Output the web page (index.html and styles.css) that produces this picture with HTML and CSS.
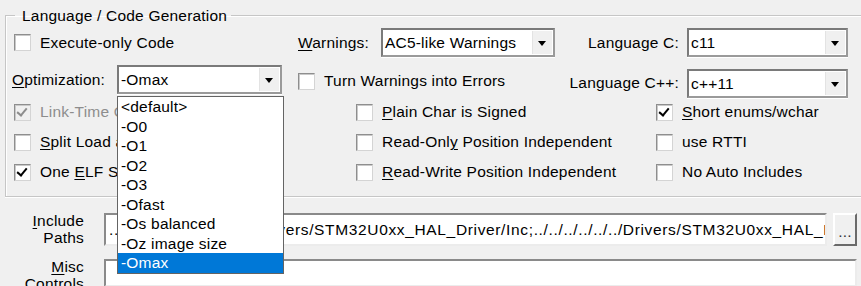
FILE: index.html
```html
<!DOCTYPE html>
<html lang="en">
<head>
    <meta charset="UTF-8">
    <title>Options for Target - C/C++</title>
    <link rel="stylesheet" href="styles.css">
</head>
<body>

<div class="dialog">
    <fieldset class="group">
        <legend>Language / Code Generation</legend>

        <!-- first row: execute-only, warnings, language C -->
        <div class="row row-one">
            <label class="check cell-left1"><span class="box"></span>Execute-only Code</label>
            <span class="lbl cell-warn"><u>W</u>arnings:</span>
            <div class="combo combo-warn"><span class="val">AC5-like Warnings</span><span class="arrow"></span></div>
            <span class="lbl lbl-lang">Language C:</span>
            <div class="combo combo-lang"><span class="val">c11</span><span class="arrow"></span></div>
        </div>

        <!-- second row: optimization (open) -->
        <div class="row row-two">
            <span class="lbl cell-opt"><u>O</u>ptimization:</span>
            <div class="combo combo-opt">
                <span class="val">-Omax</span><span class="arrow"></span>
                <ul class="droplist">
                    <li>&lt;default&gt;</li>
                    <li>-O0</li>
                    <li>-O1</li>
                    <li>-O2</li>
                    <li>-O3</li>
                    <li>-Ofast</li>
                    <li>-Os balanced</li>
                    <li>-Oz image size</li>
                    <li class="selected">-Omax</li>
                </ul>
            </div>
            <label class="check cell-turn"><span class="box"></span>Turn Warnings into Errors</label>
            <span class="lbl lbl-lang">Language C++:</span>
            <div class="combo combo-lang combo-cpp"><span class="val">c++11</span><span class="arrow"></span></div>
        </div>

        <div class="row row-small">
            <label class="check cell-left disabled"><span class="box checked"></span>Link-Time Optimization</label>
            <label class="check cell-mid"><span class="box"></span><span><u>P</u>lain Char is Signed</span></label>
            <label class="check"><span class="box checked"></span><span><u>S</u>hort enums/wchar</span></label>
        </div>
        <div class="row row-small">
            <label class="check cell-left"><span class="box"></span><span><u>S</u>plit Load and Store Multiple</span></label>
            <label class="check cell-mid"><span class="box"></span><span>Read-Onl<u>y</u> Position Independent</span></label>
            <label class="check"><span class="box"></span>use RTTI</label>
        </div>
        <div class="row row-small">
            <label class="check cell-left"><span class="box checked"></span><span>One <u>E</u>LF Section per Function</span></label>
            <label class="check cell-mid"><span class="box"></span><span><u>R</u>ead-Write Position Independent</span></label>
            <label class="check"><span class="box"></span>No Auto Includes</label>
        </div>
    </fieldset>

    <div class="paths">
        <span class="plabel"><u>I</u>nclude<br>Paths</span>
        <div class="field path-text">../../Inc;../../../../../../Drivers/STM32U0xx_HAL_Driver/Inc;../../../../../../Drivers/STM32U0xx_HAL_Driver/Inc/Legacy</div>
        <div class="browse">...</div>

        <span class="plabel"><u>M</u>isc<br>Controls</span>
        <div class="field area"></div>
    </div>
</div>

</body>
</html>
```

FILE: styles.css
```css
body {
    margin: 0;
    height: 286px;
    overflow: hidden;
    background-color: #f0f0f0;
    font-family: 'Liberation Sans', Arial, sans-serif;
    font-size: 15.5px;
    letter-spacing: 0.2px;
    color: #000;
}
u {
    text-decoration-thickness: 1px;
    text-underline-offset: 2px;
}
.dialog {
    padding: 7px 0 0 5px;
    width: 880px;
}

/* group box */
.group {
    margin: 0;
    padding: 4px 0 9px 6px;
    border: 1px solid #c6c6c6;
    border-right: none;
    box-shadow: 1px 1px 0 #fff inset, 0 1px 0 #fff;
}
.group legend {
    margin-left: 3px;
    padding: 0 4px 0 7px;
    line-height: 17px;
}

.row {
    display: flex;
    align-items: center;
    white-space: nowrap;
}
.row-one {
    height: 29px;
}
.row-two {
    height: 32px;
    margin-top: 8px;
    align-items: flex-start;
}
.row-small {
    height: 30px;
}

.lbl {
    display: inline-block;
}
.cell-left1 { width: 284px; margin-left: 2px; }
.cell-warn { width: 83px; }
.lbl-lang {
    width: 124px;
    margin-right: 8px;
    text-align: right;
}
.cell-opt {
    width: 105px;
    margin-top: 6px;
}
.cell-turn {
    width: 257px;
    margin-left: 16px;
    margin-top: 7px;
}
.row-two .lbl-lang { margin-top: 9px; }
.cell-left { width: 342px; margin-left: 2px; }
.cell-mid { width: 300px; }

/* checkboxes */
.check {
    display: flex;
    align-items: center;
}
.box {
    position: relative;
    width: 15px;
    height: 15px;
    margin-right: 9px;
    background: #fff;
    border: 1px solid #8e8e8e;
    border-right-color: #d4d4d4;
    border-bottom-color: #d4d4d4;
    box-shadow: 1px 1px 0 #c9c9c9 inset;
    flex: none;
}
.box.checked::after {
    content: "";
    position: absolute;
    left: 4px;
    top: 1px;
    width: 4px;
    height: 8px;
    border: solid #000;
    border-width: 0 2.5px 2.5px 0;
    transform: rotate(40deg);
}
.disabled {
    color: #8d8d8d;
}
.disabled .box {
    background: #f0f0f0;
}
.disabled .box.checked::after {
    border-color: #8d8d8d;
}

/* combo boxes */
.combo {
    position: relative;
    display: flex;
    align-items: center;
    height: 29px;
    box-sizing: border-box;
    background: #fff;
    border: 2px solid #7a7a7a;
    border-right-color: #9a9a9a;
    border-bottom-color: #9a9a9a;
    box-shadow: 0 1px 0 #fff;
}
.combo .val {
    flex: 1;
    padding-left: 2px;
}
.combo .arrow {
    position: relative;
    width: 19px;
    align-self: stretch;
    margin: 1px 1px 1px 0;
    background: #f0f0f0;
    border-left: 1px solid #e3e3e3;
}
.combo .arrow::after {
    content: "";
    position: absolute;
    left: 5px;
    top: 10px;
    border-left: 4.5px solid transparent;
    border-right: 4.5px solid transparent;
    border-top: 5px solid #000;
}
.combo-warn { width: 174px; }
.combo-lang { width: 161px; }
.combo-opt { width: 165px; }
.combo-cpp { margin-top: 4px; }

/* open drop-down of the optimization combo */
.droplist {
    position: absolute;
    z-index: 5;
    left: -2px;
    top: 29px;
    width: 167px;
    box-sizing: border-box;
    margin: 0;
    padding: 0;
    list-style: none;
    background: #fff;
    border: 1px solid #646464;
}
.droplist li {
    height: 19.5px;
    line-height: 19.5px;
    padding-left: 3px;
}
.droplist li.selected {
    background: #0078d7;
    color: #fff;
}

/* include paths / misc controls */
.paths {
    display: grid;
    grid-template-columns: 99px 723px 6px 24px;
    row-gap: 13px;
    margin-top: 16px;
}
.plabel {
    text-align: right;
    padding-right: 20px;
    line-height: 17px;
    margin-top: -1px;
}
.field {
    height: 33px;
    box-sizing: border-box;
    padding: 6px 0 0 3px;
    background: #fff;
    border: 2px solid #8a8a8a;
    border-right-color: #ececec;
    border-bottom-color: #ececec;
    white-space: nowrap;
    overflow: hidden;
}
.path-text {
    letter-spacing: 0.65px;
}
.browse {
    grid-column: 4;
    height: 33px;
    box-sizing: border-box;
    background: #f0f0f0;
    border: 2px solid #6a6a6a;
    border-top-color: #fff;
    border-left-color: #fff;
    text-align: center;
    line-height: 34px;
    color: #333;
}
.area {
    grid-column: 2 / 5;
    height: 28px;
}
```
